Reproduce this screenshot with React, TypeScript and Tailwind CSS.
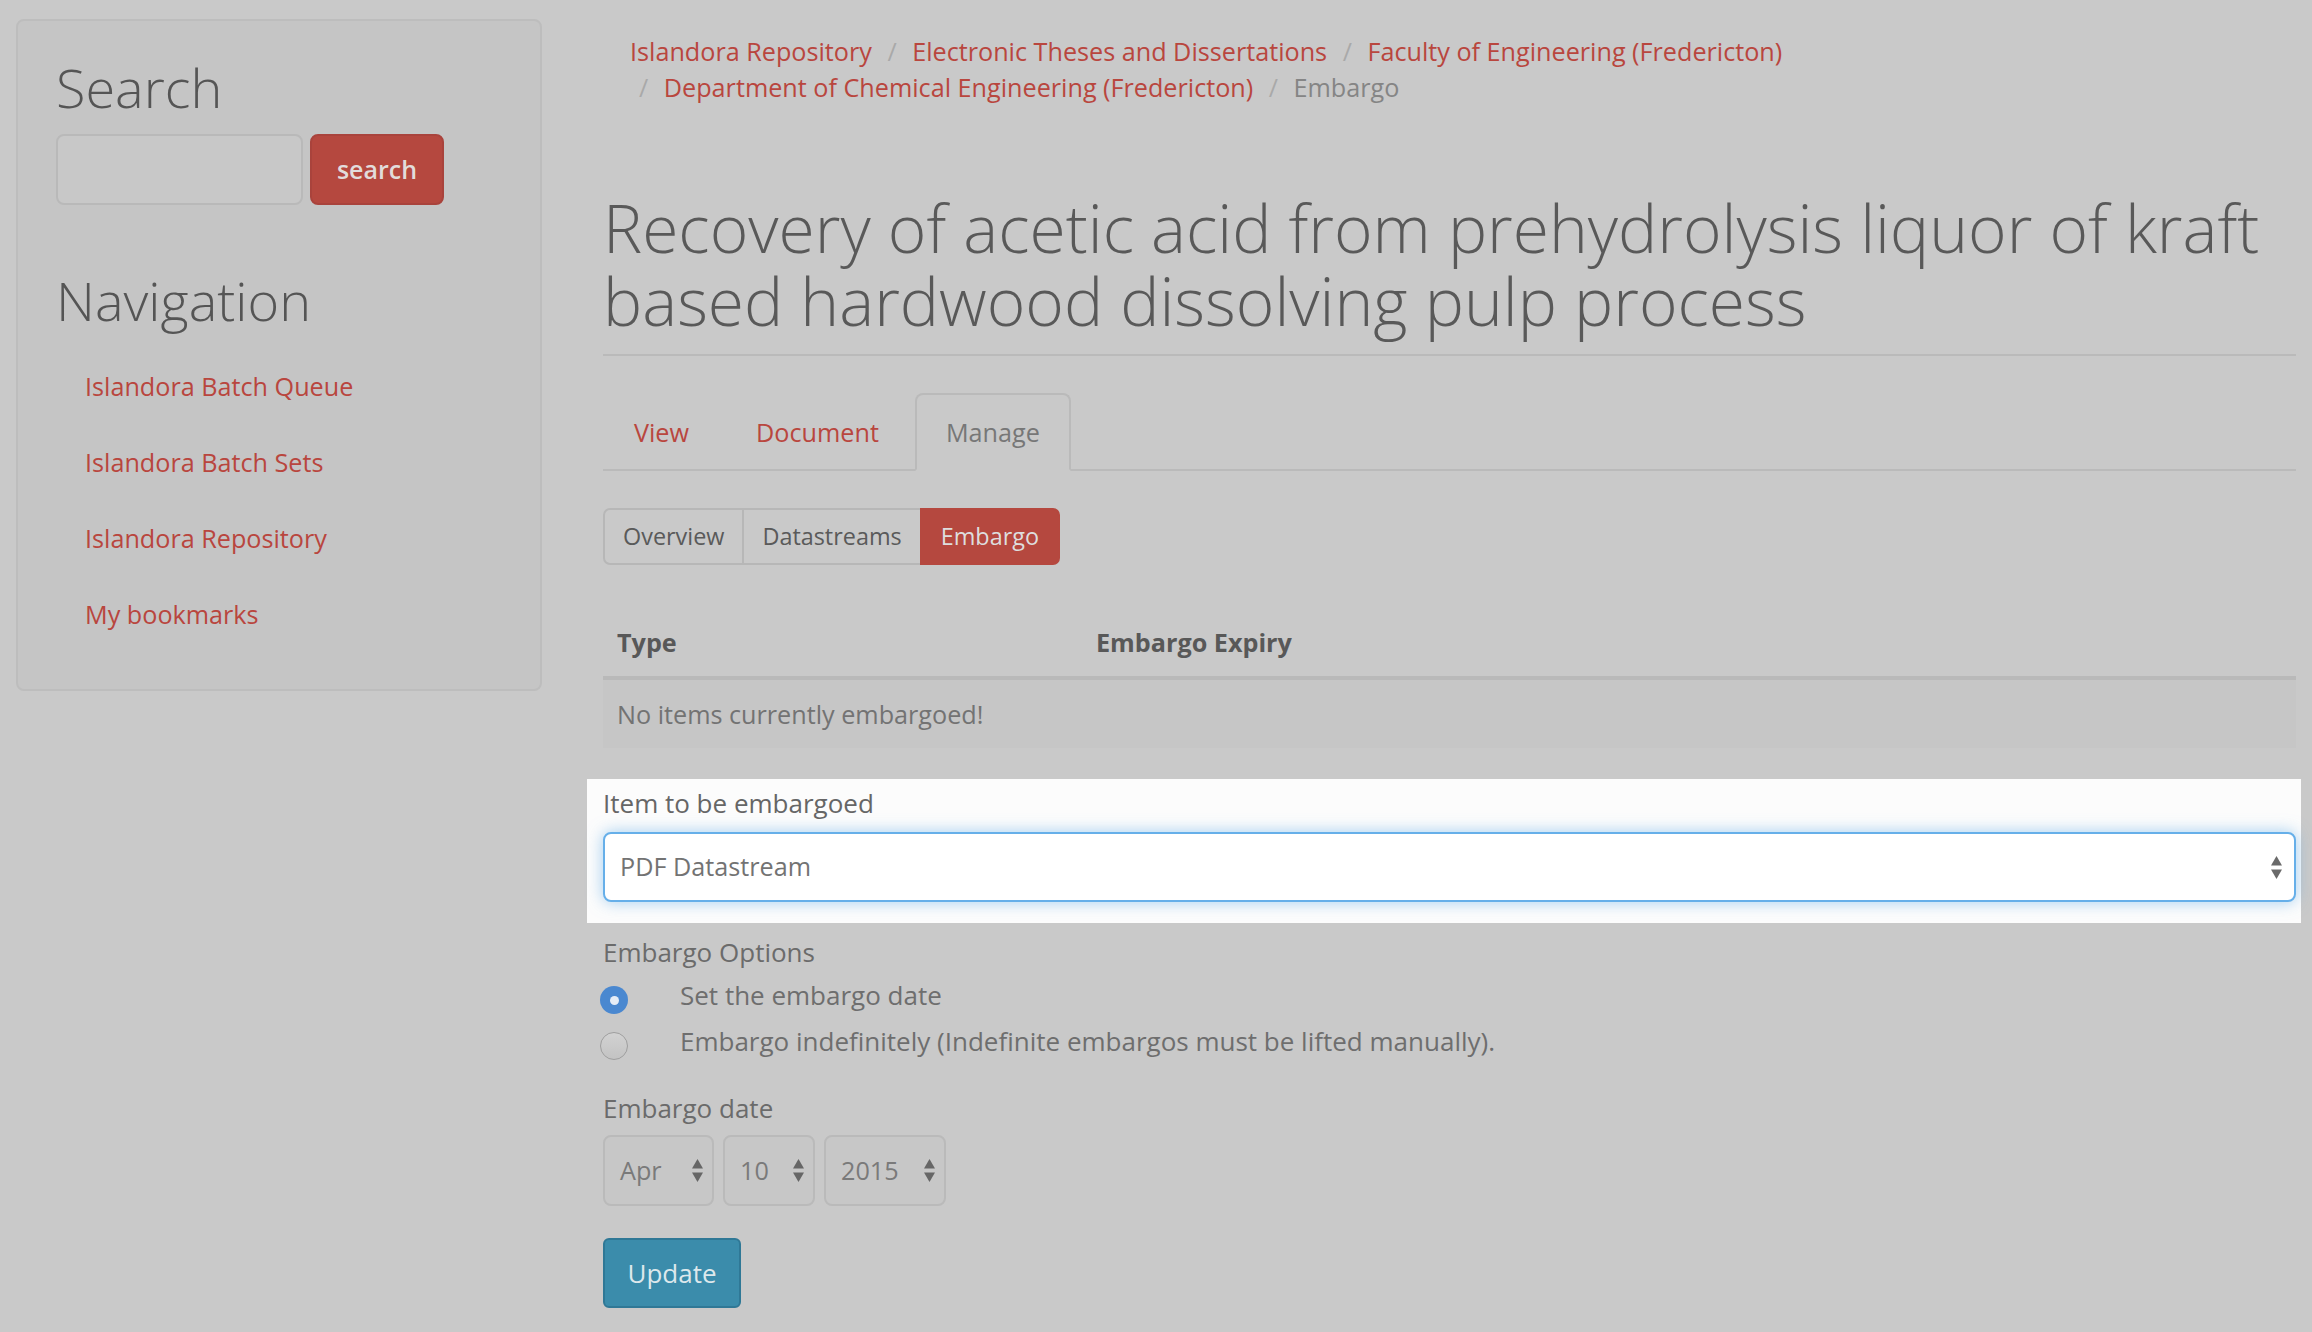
import React from "react";

const navLinks = [
	"Islandora Batch Queue",
	"Islandora Batch Sets",
	"Islandora Repository",
	"My bookmarks",
];

const crumbs = [
	"Electronic Theses and Dissertations",
	"Faculty of Engineering (Fredericton)",
	"Department of Chemical Engineering (Fredericton)",
];

function UpDown({ className }: { className?: string }) {
	return (
		<svg width="11" height="23" viewBox="0 0 11 23" className={className}>
			<path d="M5.5 0 L11 9.5 L0 9.5 Z" fill="currentColor" />
			<path d="M0 13.5 L11 13.5 L5.5 23 Z" fill="currentColor" />
		</svg>
	);
}

function DateSelect({ width, value }: { width: string; value: string }) {
	return (
		<div
			className={`${width} flex h-[71px] items-center justify-between rounded-[8px] border-2 border-[#bababa] bg-[#c7c7c7] pl-[15px] pr-[9px] text-[25.2px] text-[#7a7a7a]`}
		>
			<span>{value}</span>
			<UpDown className="text-[#666666]" />
		</div>
	);
}

export default function App() {
	return (
		<div className="flex min-h-screen w-full items-start bg-[#c9c9c9] font-['Open_Sans',sans-serif]">
			{/* Sidebar */}
			<aside className="ml-[16px] mt-[19px] h-[672px] w-[526px] shrink-0 rounded-[8px] border-2 border-[#bdbdbd] bg-[#c5c5c5] pl-[38px] pt-[37px]">
				<h2 className="text-[54px] font-light leading-[59px] text-[#555555]">Search</h2>
				<div className="mt-[17px] flex gap-[7px]">
					<div className="h-[71px] w-[247px] rounded-[8px] border-2 border-[#b9b9b9] bg-[#c8c8c8]" />
					<button className="h-[71px] w-[134px] rounded-[8px] border-2 border-[#a9433c] bg-[#b5483f] text-[25px] font-semibold text-[#e2dcdb]">
						search
					</button>
				</div>
				<h2 className="mt-[66px] text-[54px] font-light leading-[59px] text-[#555555]">
					Navigation
				</h2>
				<ul className="mt-[18px] pl-[29px]">
					{navLinks.map((l) => (
						<li key={l} className="py-[20px] text-[25.2px] leading-[36px] text-[#b9463e]">
							{l}
						</li>
					))}
				</ul>
			</aside>

			{/* Main */}
			<main className="ml-[61px] w-[1693px] shrink-0 pb-[21px] text-[25.2px]">
				<ol className="flex flex-wrap gap-x-[6.5px] px-[27px] pt-[34px] leading-[35.5px]">
					<li className="text-[#b9463e]">Islandora Repository</li>
					{crumbs.map((c) => (
						<li key={c}>
							<span className="px-[9px] text-[#a9a9a9]">/&nbsp;</span>
							<span className="text-[#b9463e]">{c}</span>
						</li>
					))}
					<li>
						<span className="px-[9px] text-[#a9a9a9]">/&nbsp;</span>
						<span className="text-[#858585]">Embargo</span>
					</li>
				</ol>

				<h1 className="mt-[86px] border-b-2 border-[#bababa] pb-[17px] text-[65.9px] font-light leading-[73px] text-[#595959]">
					Recovery of acetic acid from prehydrolysis liquor of kraft based hardwood dissolving pulp
					process
				</h1>

				{/* Tabs */}
				<ul className="mt-[37px] flex border-b-2 border-[#bababa] leading-[36px]">
					<li className="-mb-[2px] mr-[5px]">
						<span className="block rounded-t-[8px] border-2 border-transparent px-[29px] py-[19px] text-[#b9463e]">
							View
						</span>
					</li>
					<li className="-mb-[2px] mr-[5px]">
						<span className="block rounded-t-[8px] border-2 border-transparent px-[29px] py-[19px] text-[#b9463e]">
							Document
						</span>
					</li>
					<li className="-mb-[2px]">
						<span className="block rounded-t-[8px] border-2 border-[#bababa] border-b-[#c9c9c9] px-[29px] py-[19px] text-[#777777]">
							Manage
						</span>
					</li>
				</ul>

				<div className="mt-[37px] flex text-[23.4px] leading-[35px]">
					<span className="rounded-l-[7px] border-2 border-[#b7b7b7] px-[18px] py-[9px] text-[#5a5a5a]">
						Overview
					</span>
					<span className="-ml-[2px] border-2 border-[#b7b7b7] px-[18px] py-[9px] text-[#5a5a5a]">
						Datastreams
					</span>
					<span className="-ml-[2px] rounded-r-[7px] border-2 border-[#b5483f] bg-[#b5483f] px-[19px] py-[9px] text-[#dedede]">
						Embargo
					</span>
				</div>

				<table className="mt-[43px] w-full leading-[36px]">
					<thead>
						<tr className="border-b-4 border-[#b9b9b9]">
							<th className="w-[477px] px-[14px] py-[16px] text-left font-bold text-[#585858]">
								Type
							</th>
							<th className="px-[16px] py-[16px] text-left font-bold text-[#585858]">
								Embargo Expiry
							</th>
						</tr>
					</thead>
					<tbody>
						<tr className="bg-[#c6c6c6]">
							<td colSpan={2} className="px-[14px] py-[16px] text-[#737373]">
								No items currently embargoed!
							</td>
						</tr>
					</tbody>
				</table>

				{/* Highlighted form item */}
				<div className="-ml-[16px] -mr-[5px] mt-[31px] bg-[#fcfcfc] pb-[21px] pl-[16px] pr-[5px] pt-[7px]">
					<div className="text-[26px] leading-[34px] text-[#666666]">Item to be embargoed</div>
					<div className="mt-[12px] flex h-[70px] items-center justify-between rounded-[8px] border-2 border-[#66afe9] bg-white pl-[15px] pr-[12px] text-[#737373] shadow-[0_0_16px_rgba(102,175,233,0.6)]">
						<span>PDF Datastream</span>
						<UpDown className="text-[#6a6a6a]" />
					</div>
				</div>

				<div className="mt-[12px] text-[26px] leading-[34px] text-[#6b6b6b]">Embargo Options</div>
				<div className="mt-[3px] text-[26px]">
					<label className="flex h-[46px] items-center">
						<span className="-ml-[3px] mt-[10px] flex h-[28px] w-[28px] items-center justify-center rounded-full bg-[#4a88d0]">
							<span className="h-[9px] w-[9px] rounded-full bg-[#e6edf6]" />
						</span>
						<span className="ml-[52px] text-[#6e6e6e]">Set the embargo date</span>
					</label>
					<label className="flex h-[46px] items-center">
						<span className="-ml-[3px] mt-[10px] h-[28px] w-[28px] rounded-full border-[1.5px] border-[#9e9e9e] bg-gradient-to-b from-[#d2d2d2] to-[#c3c3c3]" />
						<span className="ml-[52px] text-[#6e6e6e]">
							Embargo indefinitely (Indefinite embargos must be lifted manually).
						</span>
					</label>
				</div>

				<div className="mt-[27px] text-[26px] leading-[34px] text-[#6b6b6b]">Embargo date</div>
				<div className="mt-[10px] flex gap-[9px]">
					<DateSelect width="w-[111px]" value="Apr" />
					<DateSelect width="w-[92px]" value="10" />
					<DateSelect width="w-[122px]" value="2015" />
				</div>

				<button className="mt-[32px] h-[70px] w-[138px] rounded-[6px] border-2 border-[#2f7896] bg-[#3b8cab] text-[26px] text-[#dde8ec]">
					Update
				</button>
			</main>
		</div>
	);
}
